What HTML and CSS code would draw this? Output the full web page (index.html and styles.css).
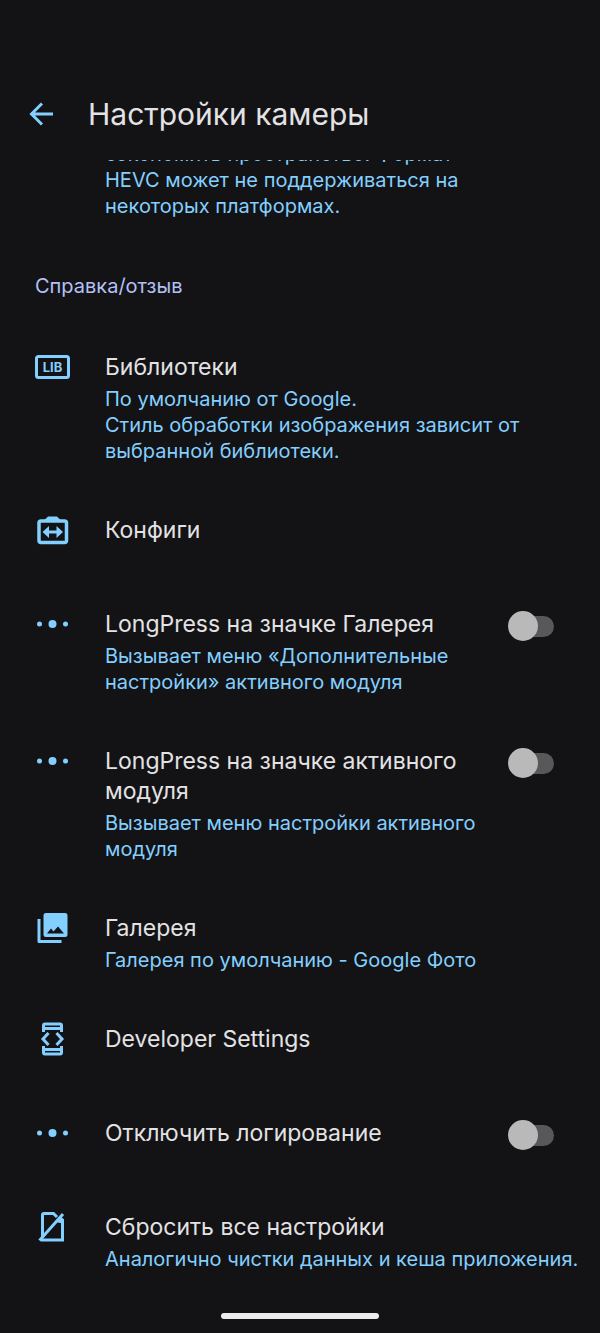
FILE: index.html
```
<!DOCTYPE html>
<html lang="ru">

<head>
    <meta charset="UTF-8">
    <meta name="viewport" content="width=device-width, initial-scale=1">
    <title>Настройки камеры</title>
    <link rel="stylesheet" href="styles.css">
</head>

<body>
    <header class="header">
        <button class="back" type="button" aria-label="Назад">
            <svg width="24" height="24" viewBox="0 0 24 24"><path d="M13 1.500 2.500 12 13 22.500M2.500 12H24" fill="none" stroke="currentColor" stroke-width="3"/></svg>
        </button>
        <h1>Настройки камеры</h1>
    </header>

    <main class="list">
        <div class="item scrolled">
            <span class="icon"></span>
            <div class="text">
                <p>сэкономить пространство. Формат<br>HEVC может не поддерживаться на<br>некоторых платформах.</p>
            </div>
        </div>

        <h2 class="section">Справка/отзыв</h2>

        <div class="item">
            <span class="icon">
                <svg width="36" height="30" viewBox="0 0 36 30">
                    <rect x="1.500" y="4.500" width="32" height="21" rx="2" fill="none" stroke="currentColor" stroke-width="3"/>
                    <text x="17.500" y="19.500" text-anchor="middle" class="lib">LIB</text>
                </svg>
            </span>
            <div class="text">
                <h3>Библиотеки</h3>
                <p>По умолчанию от Google.<br>Стиль обработки изображения зависит от выбранной библиотеки.</p>
            </div>
        </div>

        <div class="item">
            <span class="icon">
                <svg width="36" height="30" viewBox="0 0 36 30">
                    <path d="M8 6l3-2.500 2-2h9l2 2L27 6z" fill="currentColor"/>
                    <rect x="4" y="6" width="27.500" height="21.500" rx="2" fill="none" stroke="currentColor" stroke-width="3.500"/>
                    <path d="M7.500 17l6.500-6v4.500h7.500V11l6.500 6-6.500 6v-4.500H14V23z" fill="currentColor"/>
                </svg>
            </span>
            <div class="text">
                <h3>Конфиги</h3>
            </div>
        </div>

        <div class="item">
            <span class="icon">
                <svg width="36" height="30" viewBox="0 0 36 30" fill="currentColor"><circle cx="4.500" cy="15" r="2.500"/><circle cx="17.500" cy="15" r="4"/><circle cx="30.500" cy="15" r="2.500"/></svg>
            </span>
            <label class="text" for="gallery-press">
                <span class="title">LongPress на значке Галерея</span>
                <span class="summary">Вызывает меню «Дополнительные настройки» активного модуля</span>
            </label>
            <input class="switch" type="checkbox" role="switch" id="gallery-press">
        </div>

        <div class="item">
            <span class="icon">
                <svg width="36" height="30" viewBox="0 0 36 30" fill="currentColor"><circle cx="4.500" cy="15" r="2.500"/><circle cx="17.500" cy="15" r="4"/><circle cx="30.500" cy="15" r="2.500"/></svg>
            </span>
            <label class="text" for="module-press">
                <span class="title">LongPress на значке активного модуля</span>
                <span class="summary">Вызывает меню настройки активного модуля</span>
            </label>
            <input class="switch" type="checkbox" role="switch" id="module-press">
        </div>

        <div class="item">
            <span class="icon">
                <svg width="36" height="30" viewBox="0 0 36 30">
                    <path d="M4 6v22.500h22.500" fill="none" stroke="currentColor" stroke-width="3" stroke-linejoin="round"/>
                    <path fill-rule="evenodd" d="M11 0h19q2.500 0 2.500 2.500v19q0 2.500-2.500 2.500H11q-2.500 0-2.500-2.500v-19Q8.500 0 11 0zM12 20.500h17l-6-7-4.500 5-2.500-3z" fill="currentColor"/>
                </svg>
            </span>
            <div class="text">
                <h3>Галерея</h3>
                <p>Галерея по умолчанию - Google Фото</p>
            </div>
        </div>

        <div class="item">
            <span class="icon">
                <svg width="36" height="34" viewBox="0 0 36 34" fill="none" stroke="currentColor" stroke-width="3">
                    <path d="M8.500 10V3.500Q8.500 2 10 2h15q1.500 0 1.500 1.500V10M8.500 6.500h18M8.500 24v6.500Q8.500 32 10 32h15q1.500 0 1.500-1.500V24M8.500 27.500h18"/>
                    <path d="M13.500 11 8 17l5.500 6M21.500 11l5.500 6-5.500 6"/>
                </svg>
            </span>
            <div class="text">
                <h3>Developer Settings</h3>
            </div>
        </div>

        <div class="item">
            <span class="icon">
                <svg width="36" height="30" viewBox="0 0 36 30" fill="currentColor"><circle cx="4.500" cy="15" r="2.500"/><circle cx="17.500" cy="15" r="4"/><circle cx="30.500" cy="15" r="2.500"/></svg>
            </span>
            <label class="text" for="logging">
                <span class="title">Отключить логирование</span>
            </label>
            <input class="switch" type="checkbox" role="switch" id="logging">
        </div>

        <div class="item">
            <span class="icon">
                <svg width="36" height="30" viewBox="0 0 36 30" fill="none" stroke="currentColor" stroke-width="3">
                    <path d="M7.500 25V3Q7.500 1.500 9 1.500h9.500L22 5M27.500 7v21H6"/>
                    <path d="M4.500 28.500 28 2"/>
                    <path d="M21 10l5-5.500 3 3V11h-4z" fill="currentColor" stroke="none"/>
                </svg>
            </span>
            <div class="text">
                <h3>Сбросить все настройки</h3>
                <p>Аналогично чистки данных и кеша приложения.</p>
            </div>
        </div>
    </main>

    <div class="home-bar"></div>
</body>

</html>
```

FILE: styles.css
```
* {
    margin: 0;
    padding: 0;
    box-sizing: border-box;
}

body {
    background: #131315;
    color: #e3e2e4;
    font-family: Inter, "Open Sans", sans-serif;
}

/* шапка лежит поверх прокрученного списка */
.header {
    position: relative;
    z-index: 1;
    display: flex;
    align-items: center;
    gap: 35px;
    height: 160px;
    padding: 67px 29px 0;
    background: #131315;
}

.header h1 {
    font-size: 30px;
    font-weight: 400;
    line-height: 40px;
}

.back {
    display: flex;
    border: none;
    background: none;
    color: #83cfff;
    cursor: pointer;
}

.item {
    display: flex;
    align-items: flex-start;
    padding: 25px 20px 26px 35px;
}

.scrolled {
    margin-top: -44px;
}

.icon {
    display: flex;
    align-items: center;
    flex: none;
    width: 70px;
    height: 30px;
    color: #83cfff;
}

.lib {
    font-size: 13px;
    font-weight: 700;
    fill: currentColor;
}

.text {
    flex: 1;
    min-height: 43px;
}

.text h3,
.title {
    display: block;
    font-size: 23px;
    font-weight: 400;
    line-height: 30px;
}

.text p,
.summary {
    display: block;
    color: #83cfff;
    font-size: 20px;
    line-height: 26px;
}

.text h3 + p,
.summary {
    margin-top: 4px;
}

.section {
    padding: 26px 35px;
    color: #b4c0f4;
    font-size: 20px;
    font-weight: 400;
    line-height: 30px;
}

/* дорожка и бегунок лежат в одной ячейке */
.switch {
    appearance: none;
    flex: none;
    display: grid;
    align-items: center;
    width: 46px;
    height: 30px;
    margin: 2px 26px 0 28px;
    cursor: pointer;
}

.switch::before,
.switch::after {
    content: "";
    grid-area: 1 / 1;
}

.switch::before {
    height: 21px;
    margin-left: 6px;
    border-radius: 11px;
    background: #58585a;
}

.switch::after {
    width: 30px;
    height: 30px;
    border-radius: 50%;
    background: #b9b9b9;
}

.switch:checked {
    transform: scaleX(-1);
}

.home-bar {
    width: 158px;
    height: 6px;
    margin: 15px auto 14px;
    border-radius: 3px;
    background: #ececec;
}
```
